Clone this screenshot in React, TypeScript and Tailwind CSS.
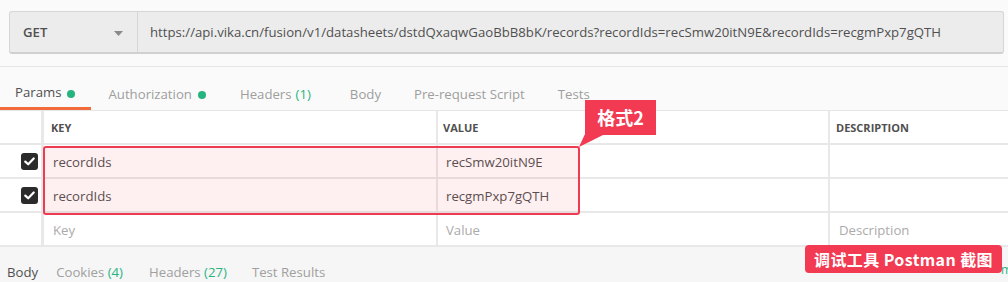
import React from "react";

const Check = () => (
  <div className="w-[17px] h-[17px] rounded-[3px] bg-[#2b2b2b] flex items-center justify-center">
    <svg width="11" height="9" viewBox="0 0 11 9" fill="none">
      <path d="M1.3 4.6 L4.2 7.3 L9.7 1.5" stroke="#fff" strokeWidth="2.2" strokeLinecap="round" strokeLinejoin="round" />
    </svg>
  </div>
);

const Dot = () => <span className="inline-block w-[8px] h-[8px] rounded-full bg-[#26b47f] ml-[6px] mt-[1px]" />;

export default function App() {
  const rows = [
    { checked: true, key: "recordIds", value: "recSmw20itN9E", desc: "" },
    { checked: true, key: "recordIds", value: "recgmPxp7gQTH", desc: "" },
  ];
  return (
    <div className="w-[1008px] h-[282px] bg-[#fafafa] font-['Open_Sans',sans-serif] text-[13.2px] relative overflow-hidden">
      {/* request bar */}
      <div className="h-[67px] border-b border-[#e6e6e6] pt-[11px] pl-[9px] pr-[4px]">
        <div className="flex h-[43px] border border-[#d6d6d6] border-b-2 border-b-[#d0d0d0] rounded-[3px] bg-[#ececec]">
          <div className="w-[128px] flex items-center justify-between pt-[2px] pl-[13px] pr-[14px] border-r border-[#d6d6d6]">
            <span className="font-semibold text-[#505050]">GET</span>
            <svg width="9" height="5" viewBox="0 0 9 5"><path d="M0 0 L9 0 L4.5 5 Z" fill="#8a8a8a" /></svg>
          </div>
          <div className="flex-1 flex items-center pt-[2px] pl-[12px] text-[#505050] whitespace-nowrap overflow-hidden">
            https://api.vika.cn/fusion/v1/datasheets/dstdQxaqwGaoBbB8bK/records?recordIds=recSmw20itN9E&amp;recordIds=recgmPxp7gQTH
          </div>
        </div>
      </div>

      {/* tabs */}
      <div className="h-[44px] flex border-b border-[#e6e6e6] text-[#9e9e9e]">
        <div className="h-full flex items-center pt-[12px] pl-[15px] pr-[16px] text-[#505050] border-b-[3px] border-[#f26b3a]">
          Params<Dot />
        </div>
        <div className="h-full flex items-center pt-[12px] pl-[17px] pr-[17px]">
          Authorization<Dot />
        </div>
        <div className="h-full flex items-center pt-[12px] pl-[17px] pr-[19px]">
          Headers<span className="text-[#26b47f] ml-[4px]">(1)</span>
        </div>
        <div className="h-full flex items-center pt-[12px] pl-[20px] pr-[16px]">Body</div>
        <div className="h-full flex items-center pt-[12px] pl-[17px] pr-[16px]">Pre-request Script</div>
        <div className="h-full flex items-center pt-[12px] pl-[17px] pr-[16px]">Tests</div>
      </div>

      {/* table */}
      <div className="bg-white">
        <div className="flex h-[34px] border-b-2 border-[#e8e8e8]">
          <div className="w-[44px] border-r-[3px] border-[#e8e8e8]" />
          <div className="w-[394px] border-r-2 border-[#e8e8e8] flex items-center pt-[3px] pl-[7px] text-[11px] font-bold text-[#505050]">KEY</div>
          <div className="w-[392px] border-r-2 border-[#e8e8e8] flex items-center pt-[3px] pl-[5px] text-[11px] font-bold text-[#505050]">VALUE</div>
          <div className="flex-1 flex items-center pt-[3px] pl-[6px] text-[11px] font-bold text-[#505050]">DESCRIPTION</div>
        </div>
        {rows.map((r, i) => (
          <div key={i} className="flex h-[34px] border-b-2 border-[#e8e8e8]">
            <div className="w-[44px] border-r-[3px] border-[#e8e8e8] flex items-center justify-end pr-[3px]">
              <Check />
            </div>
            <div className="w-[394px] border-r-2 border-[#e8e8e8] flex items-center pt-[3px] pl-[9px] text-[#505050]">{r.key}</div>
            <div className="w-[392px] border-r-2 border-[#e8e8e8] flex items-center pt-[3px] pl-[8px] text-[#505050]">{r.value}</div>
            <div className="flex-1 flex items-center pt-[3px] pl-[9px] text-[#505050]">{r.desc}</div>
          </div>
        ))}
        <div className="flex h-[34px] border-b-2 border-[#e8e8e8]">
          <div className="w-[44px] border-r-[3px] border-[#e8e8e8]" />
          <div className="w-[394px] border-r-2 border-[#e8e8e8] flex items-center pt-[3px] pl-[9px] text-[#ababab]">Key</div>
          <div className="w-[392px] border-r-2 border-[#e8e8e8] flex items-center pt-[3px] pl-[8px] text-[#ababab]">Value</div>
          <div className="flex-1 flex items-center pt-[3px] pl-[9px] text-[#ababab]">Description</div>
        </div>
      </div>

      {/* bottom tabs */}
      <div className="h-[36px] bg-[#f6f6f6] flex items-center pt-[15px] text-[#a0a0a0] relative">
        <span className="pl-[7px] text-[#505050]">Body</span>
        <span className="pl-[18px]">Cookies <span className="text-[#26b47f]">(4)</span></span>
        <span className="pl-[26px]">Headers <span className="text-[#26b47f]">(27)</span></span>
        <span className="pl-[25px]">Test Results</span>
        <span className="absolute left-[1001px] top-[14px] text-[#26b47f] text-[12px]">ms</span>
      </div>

      {/* highlight */}
      <div className="absolute left-[43px] top-[146px] w-[537px] h-[69px] border-2 border-[#ef3b52] rounded-[3px] bg-[rgba(242,58,82,0.08)] pointer-events-none" />

      {/* callout */}
      <div className="absolute left-[585px] top-[100px] w-[71px] h-[35px] bg-[#f23a52] flex items-center justify-center text-white font-bold text-[18px] font-['Noto_Sans_CJK_SC',sans-serif]">
        格式2
      </div>
      <svg className="absolute left-[578px] top-[134px]" width="30" height="14" viewBox="0 0 30 14">
        <path d="M7 0 L27 0 L1 13 Z" fill="#f23a52" />
      </svg>

      {/* badge */}
      <div className="absolute left-[805px] top-[245px] w-[197px] h-[28px] rounded-[4px] bg-[#f23a52] flex items-center justify-center text-white font-bold text-[16px] tracking-[0.4px] font-['Noto_Sans_CJK_SC',sans-serif] whitespace-nowrap">
        调试工具 Postman 截图
      </div>
    </div>
  );
}
